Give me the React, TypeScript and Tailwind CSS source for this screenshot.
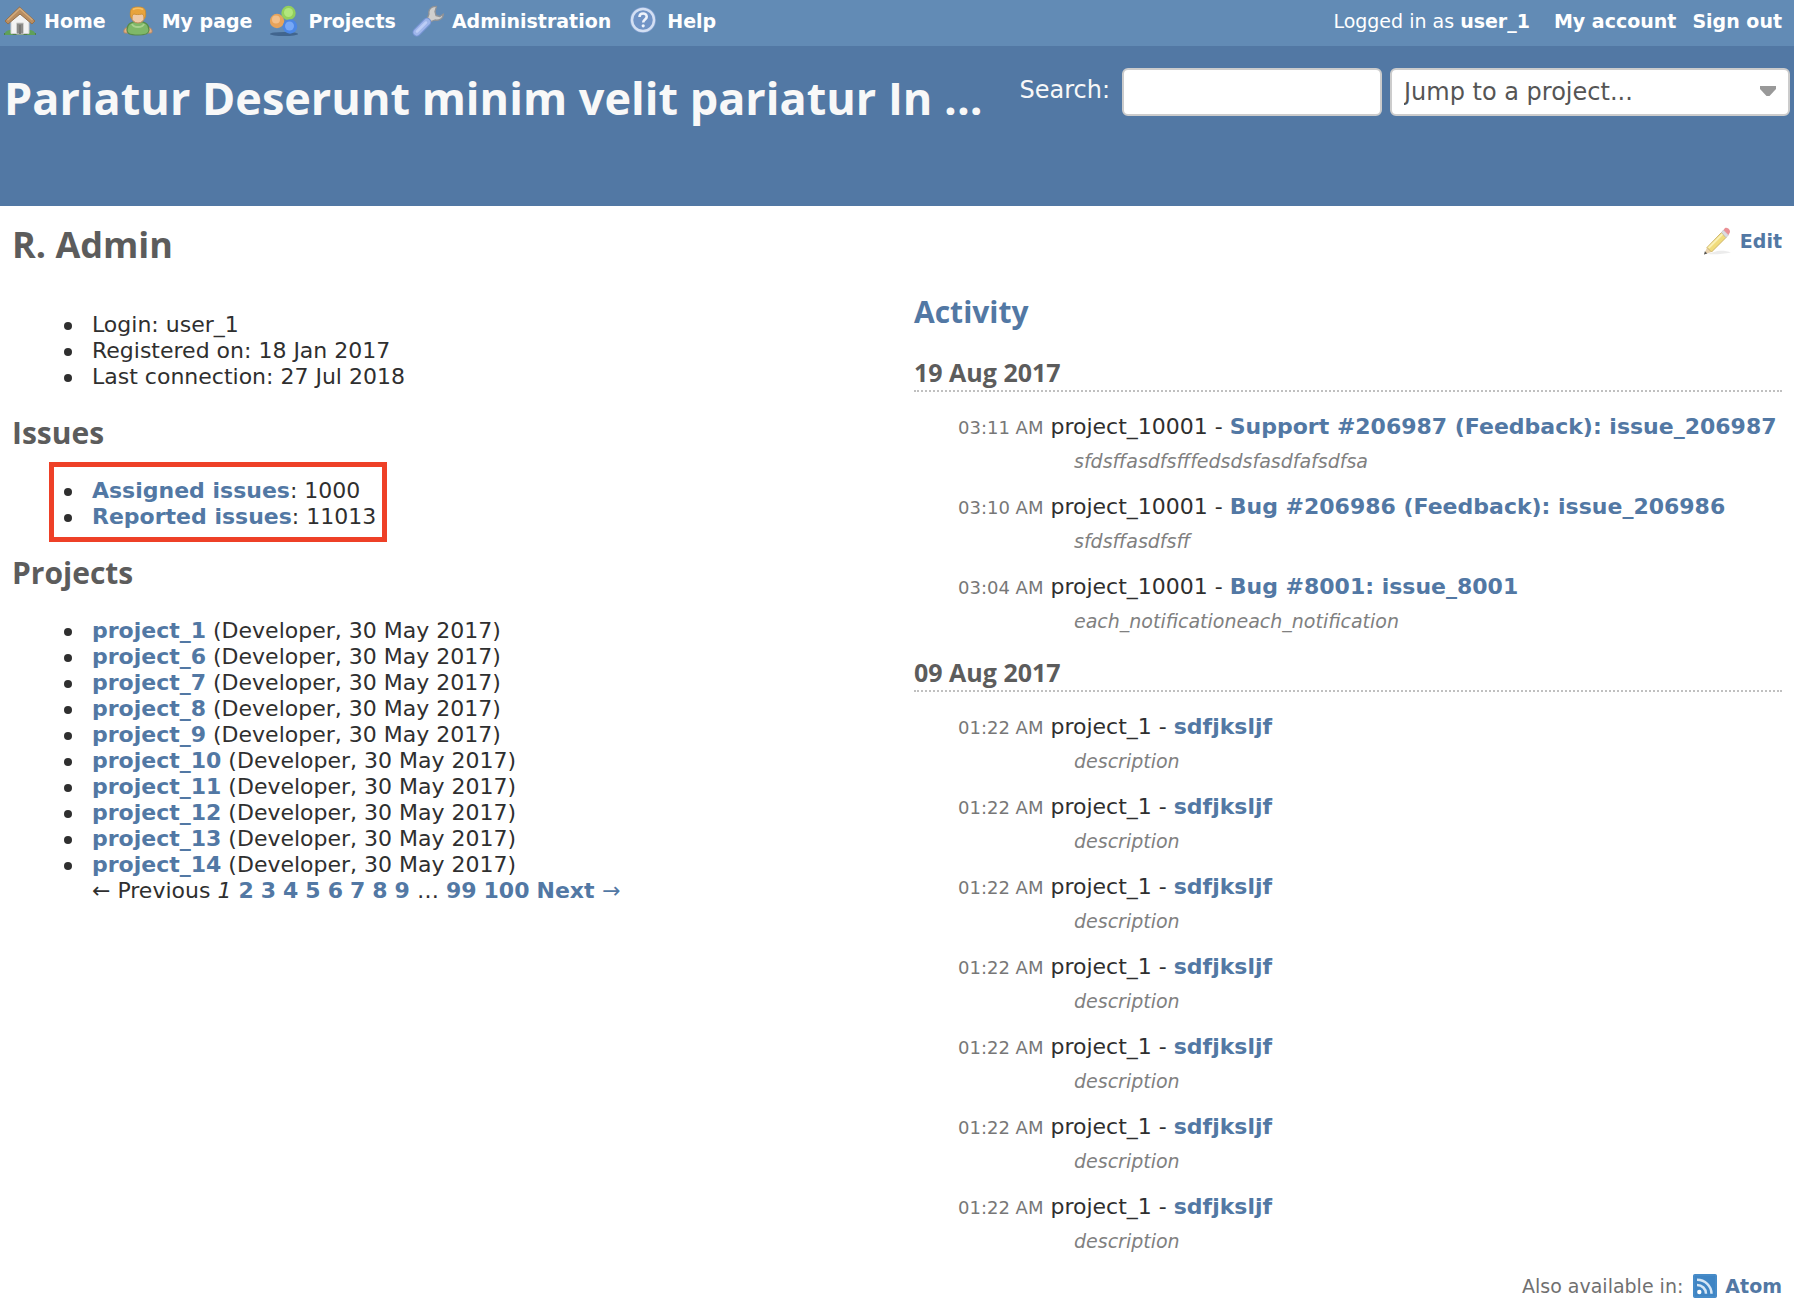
import React from "react";

const LINK = "font-bold text-[#5278a4] hover:underline";
const HEADING = "font-['Open_Sans',sans-serif] font-bold text-[#5c5c5c]";

function HomeIcon() {
  return (
    <svg className="size-8 shrink-0" viewBox="0 0 32 32" aria-hidden="true">
      <path d="M0 28h32v2H0z" fill="#4f7f4c" />
      <path d="M1 29c0-3 3-4 6-4l2 5H1zM31 29c0-3-3-4-6-4l-2 5h8z" fill="#5fa05a" />
      <path d="M7 16 16 8l9 8v12.500H7z" fill="#f3f3f3" stroke="#cfcfcf" strokeWidth="1" />
      <path d="M12.500 18h7v11h-7z" fill="#8b8b89" stroke="#d0d0ce" strokeWidth="1" />
      <path d="M15 20h2v9h-2z" fill="#777775" />
      <path d="M15.500 2 31 16l-3 3-12-10L4 19l-3-3z" fill="#b98d60" stroke="#93704d" strokeWidth="1" strokeLinejoin="round" />
      <path d="M15.800 3.500 28.500 15M15.800 3.500 3.500 15.300" stroke="#d3ac7e" strokeWidth="1.500" fill="none" />
    </svg>
  );
}

function UserIcon() {
  return (
    <svg className="size-8 shrink-0" viewBox="0 0 32 32" aria-hidden="true">
      <path d="M2.500 28c-1.500-2 0-5 3-6l1 6zM29.500 28c1.500-2 0-5-3-6l-1 6z" fill="#e3ae85" stroke="#b98860" strokeWidth="1" />
      <path d="M5 25c0-6 4-8.500 11-8.500S27 19 27 25c0 2.500-1 5-11 5S5 27.500 5 25z" fill="#7fb868" stroke="#588a4a" strokeWidth="1.200" />
      <path d="M10 19c1.500 4 10.500 4 12 0" stroke="#a9d18e" strokeWidth="2" fill="none" />
      <ellipse cx="16" cy="12" rx="6.500" ry="6" fill="#efcaa8" stroke="#c08c58" strokeWidth="1" />
      <path d="M8.500 12C7.500 3.500 10 2 16 2s8.500 1.500 7.500 10l-1.500 1.500c0-2.500-.5-4-2-4.500-3 1-7 .5-8 0-1.500.5-2 2-2 4.500z" fill="#e8a33c" stroke="#c88a30" strokeWidth=".8" />
      <path d="M11 4.500c3-1.500 7-1.500 10 0" stroke="#f6c164" strokeWidth="1.500" fill="none" />
    </svg>
  );
}

function ProjectsIcon() {
  return (
    <svg className="size-8 shrink-0" viewBox="0 0 32 32" aria-hidden="true">
      <ellipse cx="16" cy="29" rx="14" ry="2" fill="#33557d" opacity=".7" />
      <circle cx="9" cy="16" r="7.200" fill="#e8a35a" />
      <circle cx="8" cy="14.500" r="4" fill="#f4c08a" />
      <circle cx="20.500" cy="8" r="7.200" fill="#93cf5c" />
      <circle cx="20.500" cy="7.500" r="4.500" fill="#b2e67c" />
      <circle cx="22" cy="21.500" r="7.200" fill="#4b86e4" />
      <circle cx="21.500" cy="21" r="4.500" fill="#77a8f6" />
    </svg>
  );
}

function WrenchIcon() {
  return (
    <svg className="size-8 shrink-0" viewBox="0 0 32 32" aria-hidden="true">
      <path d="M15.500 16.500 21 11" stroke="#9a9a9a" strokeWidth="5" />
      <path d="M24.500 1.500c-5-.5-8.500 3-7.500 7.500l-1.500 4 3.500 3.500 4-1.500c4.500 1 8-1.500 8.500-6l-3.500 2.500-4-1-1-4z" fill="#cfcfcd" stroke="#8f9296" strokeWidth="1.300" strokeLinejoin="round" />
      <path d="M4.800 27.200 15 17" stroke="#7795d4" strokeWidth="8.500" strokeLinecap="round" />
      <path d="M4.800 27.200 15 17" stroke="#9fb6ea" strokeWidth="6.500" strokeLinecap="round" />
      <path d="M5 26.500 14 17.500" stroke="#bccdf6" strokeWidth="2.500" strokeLinecap="round" />
    </svg>
  );
}

function HelpIcon() {
  return (
    <svg className="size-8 shrink-0" viewBox="0 0 32 32" aria-hidden="true">
      <circle cx="16" cy="15" r="13" fill="#7f9fce" />
      <circle cx="16" cy="15" r="11" fill="#7194c6" stroke="#d3dff3" strokeWidth="2.500" />
      <path d="M12.500 12c0-4.600 7.200-4.600 7.200-.3 0 2.800-3.500 2.800-3.500 5.800" stroke="#eef3fb" strokeWidth="2.600" fill="none" />
      <circle cx="16.200" cy="20.800" r="1.600" fill="#eef3fb" />
    </svg>
  );
}

function PencilIcon() {
  return (
    <svg className="size-8 shrink-0" viewBox="0 0 32 32" aria-hidden="true">
      <path d="M5 29c8 .8 16 0 24-1.500-5-2-12-2.500-17-.5z" fill="#ececec" />
      <path d="m5 22.500 4.500 4.500L2 29.500z" fill="#e9d3ae" />
      <path d="M5 22.500 19.500 7.500l4.500 5L9.500 27z" fill="#f1dc7c" stroke="#cdb36a" strokeWidth="1" />
      <path d="M6.500 23 20.500 9" stroke="#faf0b4" strokeWidth="2" />
      <path d="m19.500 7.500 2-2.500 5 5-2.500 2.500z" fill="#dcdce0" stroke="#b9b9be" strokeWidth=".6" />
      <path d="m21.500 5 1.500-2c2.500-1.500 6 2.200 4.700 4.700L26.500 10z" fill="#ea9095" />
      <path d="m2 29.500.9-3.200 2.400 2.200z" fill="#555" />
    </svg>
  );
}

function FeedIcon() {
  return (
    <svg className="size-6 shrink-0" viewBox="0 0 24 24" aria-hidden="true">
      <rect width="24" height="24" rx="2" fill="#3f85c4" />
      <rect x="1" y="1" width="22" height="22" rx="1.500" fill="none" stroke="#4f92cd" strokeWidth="1" />
      <circle cx="6.300" cy="18" r="2.200" fill="#fff" />
      <path d="M4 11c5 0 9 3.700 9 8.700M4 5.800c8 0 14.500 6 14.500 14" fill="none" stroke="#d5e6f5" strokeWidth="2.500" />
    </svg>
  );
}

const menu = [
  { label: "Home", Icon: HomeIcon },
  { label: "My page", Icon: UserIcon },
  { label: "Projects", Icon: ProjectsIcon },
  { label: "Administration", Icon: WrenchIcon },
  { label: "Help", Icon: HelpIcon },
];

const projects = [1, 6, 7, 8, 9, 10, 11, 12, 13, 14];

type Entry = { time: string; project: string; title: string; text: string };

const note: Entry = { time: "01:22 AM", project: "project_1", title: "sdfjksljf", text: "description" };

const days: { date: string; entries: Entry[] }[] = [
  {
    date: "19 Aug 2017",
    entries: [
      { time: "03:11 AM", project: "project_10001", title: "Support #206987 (Feedback): issue_206987", text: "sfdsffasdfsfffedsdsfasdfafsdfsa" },
      { time: "03:10 AM", project: "project_10001", title: "Bug #206986 (Feedback): issue_206986", text: "sfdsffasdfsff" },
      { time: "03:04 AM", project: "project_10001", title: "Bug #8001: issue_8001", text: "each_notificationeach_notification" },
    ],
  },
  { date: "09 Aug 2017", entries: [note, note, note, note, note, note, note] },
];

function BulletItem({ children }: { children: React.ReactNode }) {
  return (
    <li className="flex items-center">
      <span className="mt-0.5 mr-5 size-2 shrink-0 rounded-full bg-[#2f2f2f]" aria-hidden="true" />
      <span>{children}</span>
    </li>
  );
}

function Link({ children }: { children: React.ReactNode }) {
  return (
    <a href="#" className={LINK}>
      {children}
    </a>
  );
}

export default function App() {
  return (
    <div className="min-h-screen bg-white font-['DejaVu_Sans',Verdana,sans-serif] text-[22px] leading-[26px] text-[#2f2f2f]">
      <nav className="flex items-center justify-between bg-[#628bb5] pt-[5px] pr-3 pb-[9px] pl-1 text-[19px] leading-6 font-bold text-white">
        <ul className="flex gap-4">
          {menu.map(({ label, Icon }) => (
            <li key={label}>
              <a href="#" className="flex items-center gap-2 hover:underline">
                <Icon />
                {label}
              </a>
            </li>
          ))}
        </ul>
        <div className="flex">
          <span className="mr-6 font-normal">
            Logged in as{" "}
            <a href="#" className="font-bold hover:underline">
              user_1
            </a>
          </span>
          <a href="#" className="mr-4 hover:underline">
            My account
          </a>
          <a href="#" className="hover:underline">
            Sign out
          </a>
        </div>
      </nav>

      <header className="flex min-h-[160px] items-start justify-between bg-[#5278a4] pt-[22px] pr-1 pl-1 text-[#f8f8f8]">
        <h1 className="font-['Open_Sans',sans-serif] text-[45px] leading-[60px] font-bold whitespace-nowrap">
          Pariatur Deserunt minim velit pariatur In ...
        </h1>
        <form className="flex items-start text-2xl" onSubmit={(e) => e.preventDefault()}>
          <label htmlFor="q" className="mr-3 leading-[44px]">
            Search:
          </label>
          <input
            id="q"
            type="text"
            className="mr-2 h-12 w-[260px] rounded-md border-2 border-[#ccc] bg-white px-3 text-[#555]"
          />
          <div className="relative">
            <select
              aria-label="Jump to a project"
              className="h-12 w-[400px] appearance-none rounded-md border-2 border-[#ccc] bg-white px-3 text-[#555]"
            >
              <option>Jump to a project...</option>
            </select>
            <svg className="pointer-events-none absolute top-[18px] right-3.5 h-[11px] w-4" viewBox="0 0 16 11" aria-hidden="true">
              <path d="M0 0h16v3L9.500 10h-3L0 3z" fill="#999" />
            </svg>
          </div>
        </form>
      </header>

      <main className="px-3 pt-[15px]">
        <div className="flex items-start justify-between">
          <h2 className={HEADING + " text-4xl leading-[48px]"}>R. Admin</h2>
          <a href="#" className="mt-1 flex items-center gap-1.5 text-[19px] leading-6 font-bold text-[#5278a4] hover:underline">
            <PencilIcon />
            Edit
          </a>
        </div>

        <div className="grid grid-cols-2 gap-x-[34px]">
          <section>
            <ul className="mt-[43px] pl-[52px]">
              <BulletItem>Login: user_1</BulletItem>
              <BulletItem>Registered on: 18 Jan 2017</BulletItem>
              <BulletItem>Last connection: 27 Jul 2018</BulletItem>
            </ul>

            <h3 className={HEADING + " mt-[23px] text-[30px] leading-10"}>Issues</h3>
            <ul className="mt-[9px] ml-[37px] w-fit border-5 border-[#ee4027] pt-[11px] pr-1.5 pb-[7px] pl-2.5">
              <BulletItem>
                <Link>Assigned issues</Link>: 1000
              </BulletItem>
              <BulletItem>
                <Link>Reported issues</Link>: 11013
              </BulletItem>
            </ul>

            <h3 className={HEADING + " mt-[11px] text-[30px] leading-10"}>Projects</h3>
            <ul className="mt-[25px] pl-[52px]">
              {projects.map((n) => (
                <BulletItem key={n}>
                  <Link>project_{n}</Link> (Developer, 30 May 2017)
                </BulletItem>
              ))}
            </ul>
            <p className="pl-20">
              ← Previous <em>1</em>{" "}
              {[2, 3, 4, 5, 6, 7, 8, 9].map((n) => (
                <React.Fragment key={n}>
                  <Link>{n}</Link>{" "}
                </React.Fragment>
              ))}
              … <Link>99</Link> <Link>100</Link>{" "}
              <Link>
                Next <span className="font-normal">→</span>
              </Link>
            </p>
          </section>

          <section>
            <h3 className="mt-[23px] mb-6 font-['Open_Sans',sans-serif] text-[30px] leading-10 font-bold">
              <a href="#" className="text-[#5278a4] hover:underline">
                Activity
              </a>
            </h3>
            {days.map((day) => (
              <div key={day.date} className="mb-[23px]">
                <h4 className={HEADING + " border-b-2 border-dotted border-[#c0c0c0] pb-0.5 text-[25px] leading-8"}>{day.date}</h4>
                <ul className="mt-[22px] flex flex-col gap-[21px]">
                  {day.entries.map((entry, i) => (
                    <li key={i} className="pl-11">
                      <p className="whitespace-nowrap">
                        <span className="text-lg leading-none text-[#777]">{entry.time}</span> {entry.project} - <Link>{entry.title}</Link>
                      </p>
                      <p className="mt-[9px] pl-[116px] text-[19px] leading-6 text-[#808080] italic">{entry.text}</p>
                    </li>
                  ))}
                </ul>
              </div>
            ))}
          </section>
        </div>

        <p className="-mt-0.5 flex items-center justify-end text-[19px] leading-6 text-[#707070]">
          Also available in:
          <a href="#" className="ml-2.5 flex items-center gap-2 font-bold text-[#5278a4] hover:underline">
            <FeedIcon />
            Atom
          </a>
        </p>
      </main>
    </div>
  );
}
